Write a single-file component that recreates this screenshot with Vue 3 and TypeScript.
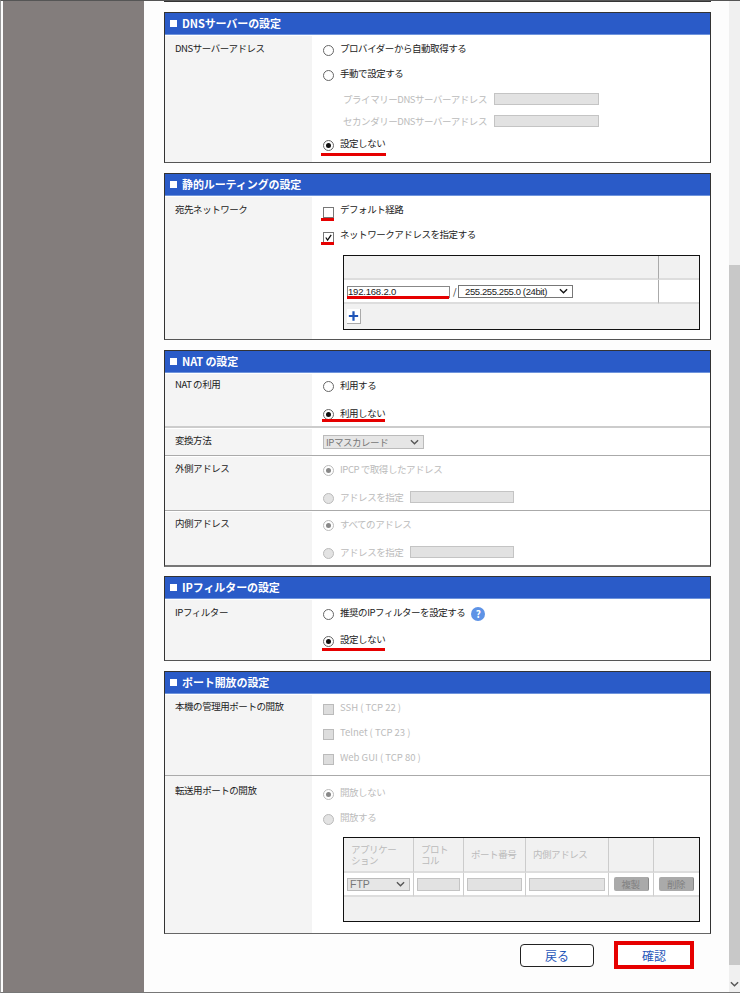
<script setup lang="ts">
const ports = ['SSH ( TCP 22 )', 'Telnet ( TCP 23 )', 'Web GUI ( TCP 80 )']
</script>

<template>
  <div class="window">
    <aside class="sidebar"></aside>
    <main class="content">
      <div class="cut"></div>

      <section class="panel p1">
        <h2><i></i>DNSサーバーの設定</h2>
        <div class="row">
          <div class="label">DNSサーバーアドレス</div>
          <div class="value">
            <div class="opt"><span class="radio"></span><span>プロバイダーから自動取得する</span></div>
            <div class="opt"><span class="radio"></span><span>手動で設定する</span></div>
            <div class="opt sub off"><span class="sublabel">プライマリーDNSサーバーアドレス</span><span class="field f-dns"></span></div>
            <div class="opt sub off short"><span class="sublabel">セカンダリーDNSサーバーアドレス</span><span class="field f-dns"></span></div>
            <div class="opt"><span class="radio on"></span><span>設定しない</span><b class="mark m-radio"></b></div>
          </div>
        </div>
      </section>

      <section class="panel p2">
        <h2><i></i>静的ルーティングの設定</h2>
        <div class="row">
          <div class="label">宛先ネットワーク</div>
          <div class="value">
            <div class="opt"><span class="check"></span><span>デフォルト経路</span><b class="mark m-check"></b></div>
            <div class="opt">
              <span class="check">
                <svg viewBox="0 0 10 10"><path d="M2 5l2 3 4-6" fill="none" stroke="#111" stroke-width="1.4" /></svg>
              </span>
              <span>ネットワークアドレスを指定する</span><b class="mark m-check m-check2"></b>
            </div>
            <div class="route">
              <div class="r-head"></div><div class="r-head r-side"></div>
              <div class="r-cell">
                <span class="ip">192.168.2.0<b class="mark m-ip"></b></span>
                <span class="slash">/</span>
                <span class="select s-mask">255.255.255.0 (24bit)<svg viewBox="0 0 10 6"><path d="M1 1l4 4 4-4" fill="none" stroke="#111" stroke-width="1.5" /></svg></span>
              </div>
              <div class="r-cell r-side"></div>
              <div class="r-foot">
                <span class="plus"><svg viewBox="0 0 14 14"><path d="M7 2v10M2 7h10" stroke="#1f55b8" stroke-width="2.4" /></svg></span>
              </div>
            </div>
          </div>
        </div>
      </section>

      <section class="panel p3">
        <h2><i></i>NAT の設定</h2>
        <div class="row h53">
          <div class="label l-tight">NAT の利用</div>
          <div class="value">
            <div class="opt o24"><span class="radio"></span><span>利用する</span></div>
            <div class="opt o24"><span class="radio on"></span><span>利用しない</span><b class="mark m-nat"></b></div>
          </div>
        </div>
        <div class="row sep2 h27">
          <div class="label l-mid">変換方法</div>
          <div class="value off centered">
            <span class="select s-nat">IPマスカレード<svg viewBox="0 0 10 6"><path d="M1 1l4 4 4-4" fill="none" stroke="#555" stroke-width="1.5" /></svg></span>
          </div>
        </div>
        <div class="row sep1 h54">
          <div class="label l-mid">外側アドレス</div>
          <div class="value off v2">
            <div class="opt o24"><span class="radio on"></span><span>IPCP で取得したアドレス</span></div>
            <div class="opt o24"><span class="radio"></span><span>アドレスを指定</span><span class="field f-nat"></span></div>
          </div>
        </div>
        <div class="row sep1 h54">
          <div class="label l-mid">内側アドレス</div>
          <div class="value off v2">
            <div class="opt o24"><span class="radio on"></span><span>すべてのアドレス</span></div>
            <div class="opt o24"><span class="radio"></span><span>アドレスを指定</span><span class="field f-nat"></span></div>
          </div>
        </div>
      </section>

      <section class="panel p4">
        <h2><i></i>IPフィルターの設定</h2>
        <div class="row">
          <div class="label">IPフィルター</div>
          <div class="value">
            <div class="opt o26"><span class="radio"></span><span>推奨のIPフィルターを設定する</span><span class="help">?</span></div>
            <div class="opt o28"><span class="radio on"></span><span>設定しない</span><b class="mark m-filter"></b></div>
          </div>
        </div>
      </section>

      <section class="panel p5">
        <h2><i></i>ポート開放の設定</h2>
        <div class="row h81">
          <div class="label l-mid">本機の管理用ポートの開放</div>
          <div class="value off">
            <div v-for="p in ports" :key="p" class="opt"><span class="check"></span><span class="latin">{{ p }}</span></div>
          </div>
        </div>
        <div class="row sep1 grow">
          <div class="label l-low">転送用ポートの開放</div>
          <div class="value off v4">
            <div class="opt"><span class="radio on"></span><span>開放しない</span></div>
            <div class="opt"><span class="radio"></span><span>開放する</span></div>
            <div class="forward">
              <div class="th">アプリケー<br />ション</div>
              <div class="th">プロト<br />コル</div>
              <div class="th">ポート番号</div>
              <div class="th">内側アドレス</div>
              <div class="th"></div>
              <div class="th last"></div>
              <div class="td"><span class="select s-ftp">FTP<svg viewBox="0 0 10 6"><path d="M1 1l4 4 4-4" fill="none" stroke="#555" stroke-width="1.5" /></svg></span></div>
              <div class="td"><span class="field fill"></span></div>
              <div class="td"><span class="field fill"></span></div>
              <div class="td"><span class="field fill"></span></div>
              <div class="td"><span class="mini">複製</span></div>
              <div class="td last"><span class="mini">削除</span></div>
              <div class="tf"></div>
            </div>
          </div>
        </div>
      </section>

      <div class="actions">
        <button type="button" class="btn">戻る</button>
        <button type="button" class="btn primary">確認</button>
      </div>
    </main>
    <div class="scrollbar">
      <div class="thumb"></div>
      <svg class="arrow" viewBox="0 0 10 6"><path d="M1 1l4 4 4-4" fill="none" stroke="#555" stroke-width="1.6" /></svg>
    </div>
  </div>
</template>

<style>
html, body { margin: 0; background: #fff; }
</style>

<style scoped>
.window {
  width: 740px;
  height: 993px;
  box-sizing: border-box;
  display: flex;
  overflow: hidden;
  border-top: 1px solid #555;
  border-bottom: 1px solid #777;
  border-left: 1px solid #999;
  background: #fdfdfd;
  font-family: "Noto Sans CJK JP", "Liberation Sans", sans-serif;
  font-size: 9.5px;
  letter-spacing: -0.45px;
  color: #222;
}
.sidebar { width: 141px; margin-left: 2px; background: #837d7c; flex: none; }
.content { width: 585px; padding: 0 18px 0 20px; box-sizing: border-box; flex: none; }
.cut { height: 0; border-bottom: 1px solid #333; margin-bottom: 10px; }

.panel {
  border: 1px solid #333;
  border-bottom-color: #555;
  background: #fff;
  margin-bottom: 10px;
  display: flex;
  flex-direction: column;
  box-sizing: border-box;
}
.p1 { height: 151px; }
.p2 { height: 167px; }
.p3 { height: 217px; margin-bottom: 9px; border-bottom: 2px solid #777; }
.p4 { height: 85px; }
.p5 { height: 263px; margin-bottom: 7px; border-bottom-color: #666; }

h2 {
  margin: 0;
  height: 19px;
  box-sizing: content-box;
  flex: none;
  display: flex;
  align-items: center;
  background: #2a5bc8;
  border-bottom: 1px solid #6f94dc;
  color: #fff;
  font-size: 11px;
  letter-spacing: -0.1px;
  font-weight: 700;
  padding: 0 0 2px 5px;
  line-height: 18px;
}
h2 i { width: 7px; height: 7px; background: #fff; margin-right: 5px; margin-top: 1px; }

.row { display: flex; flex: 1; min-height: 0; }
.h53 { flex: none; height: 53px; }
.h54 { flex: none; height: 54px; }
.h27 { flex: none; height: 27px; }
.h81 { flex: none; height: 81px; }
.grow { flex: 1; }
.sep1 { border-top: 1px solid #aaa; }
.sep2 { border-top: 2px solid #ccc; }
.label {
  width: 147px;
  flex: none;
  background: #f4f4f4;
  box-sizing: border-box;
  padding: 5px 0 0 10px;
  line-height: 14px;
  margin-top: 1px;
}
.label.l-tight { padding-top: 3px; }
.label.l-mid { padding-top: 4px; }
.label.l-low { padding-top: 7px; margin-top: 0; }
.value { flex: 1; padding-left: 11px; padding-top: 1px; }
.value.v2 { padding-top: 2px; }
.value.v4 { padding-top: 4px; }
.value.centered { display: flex; align-items: center; padding-top: 0; }
.off { color: #bbb; }

.opt {
  height: 25px;
  box-sizing: border-box;
  padding-bottom: 2px;
  display: flex;
  align-items: center;
  gap: 5px;
  position: relative;
  white-space: nowrap;
}
.opt.o24 { height: 24px; margin-bottom: 4px; }
.opt.o26 { height: 26px; }
.opt.o28 { height: 28px; }
.opt.short { height: 20px; }
.opt.sub { padding-left: 20px; padding-bottom: 0; gap: 7px; }
.opt.sub .sublabel { width: 144px; white-space: nowrap; }
.latin { letter-spacing: 0; }

.radio {
  width: 9px;
  height: 9px;
  border: 1px solid #666;
  border-radius: 50%;
  background: #fff;
  flex: none;
  position: relative;
  margin-top: 5px;
  margin-right: 1px;
}
.o24 .radio { margin-top: 2px; }
.radio.on::after {
  content: "";
  position: absolute;
  inset: 2px;
  border-radius: 50%;
  background: #111;
}
.off .radio { border-color: #bbb; background: #e3e3e3; }
.off .radio.on { background: #fff; }
.off .radio.on::after { background: #888; }

.check {
  width: 9px;
  height: 9px;
  border: 1px solid #777;
  background: #fff;
  flex: none;
  margin-top: 7px;
  margin-right: 1px;
  display: block;
}
.off .check { margin-top: 5px; background: #ddd; border-color: #bbb; }
.check svg { display: block; width: 9px; height: 9px; }

.mark { position: absolute; height: 3px; background: #e60000; }
.m-radio { left: -2px; width: 65px; bottom: 0; }
.m-check { left: -2px; width: 13px; bottom: 1px; }
.m-check2 { bottom: 2px; }
.m-nat { left: -1px; width: 63px; bottom: 4px; }
.m-filter { left: -1px; width: 63px; bottom: 3px; }
.m-ip { left: -1px; right: 0; bottom: -2px; }

.field {
  display: block;
  height: 10px;
  background: #e2e2e2;
  border: 1px solid #c4c4c4;
  flex: none;
}
.f-dns { width: 103px; }
.f-nat { width: 102px; margin-left: 2px; }
.fill { width: 100%; box-sizing: border-box; height: 13px; }

.route {
  margin: 8px 0 0 20px;
  width: 357px;
  height: 75px;
  box-sizing: border-box;
  border: 1px solid #111;
  display: grid;
  grid-template-columns: 1fr 41px;
  grid-template-rows: 24px 24px 1fr;
  background: #fff;
}
.r-head { background: #f1f1f1; border-bottom: 2px solid #ddd; }
.r-side { border-left: 1px solid #aaa; }
.r-cell { display: flex; align-items: center; padding-left: 3px; border-bottom: 2px solid #ddd; gap: 3px; color: #222; }
.r-foot { grid-column: 1 / 3; background: #f1f1f1; padding: 5px 0 0 3px; }
.ip {
  position: relative;
  width: 103px;
  height: 12px;
  margin-top: 1px;
  box-sizing: border-box;
  border: 1px solid #888;
  line-height: 9px;
  padding-left: 0;
  font-family: "Liberation Sans", sans-serif;
  font-size: 9.5px;
  letter-spacing: -0.2px;
}
.slash { font-size: 9px; }
.select {
  display: flex;
  align-items: center;
  justify-content: space-between;
  box-sizing: border-box;
  border: 1px solid #777;
  height: 13px;
  padding: 0 4px 0 2px;
  background: #fff;
  white-space: nowrap;
}
.select svg { width: 9px; height: 6px; flex: none; }
.s-mask { width: 115px; margin-left: -1px; padding-left: 6px; font-family: "Liberation Sans", sans-serif; letter-spacing: -0.4px; }
.s-nat { width: 101px; background: #e6e6e6; border-color: #bbb; color: #777; height: 14px; }
.s-ftp { width: 64px; background: #e6e6e6; border-color: #bbb; color: #777; font-family: "Liberation Sans", sans-serif; font-size: 10.5px; letter-spacing: 0; }
.plus {
  display: block;
  width: 13px;
  height: 14px;
  border-right: 1px solid #aaa;
  border-bottom: 1px solid #aaa;
  background: #fff;
}
.plus svg { display: block; width: 13px; height: 14px; }

.help {
  width: 14px;
  height: 14px;
  border-radius: 50%;
  background: #5e93e6;
  color: #fff;
  font-weight: 700;
  font-size: 10px;
  letter-spacing: 0;
  line-height: 14px;
  text-align: center;
  margin-left: 1px;
  margin-top: 4px;
}

.forward {
  margin: 7px 0 0 20px;
  width: 357px;
  height: 85px;
  box-sizing: border-box;
  border: 1px solid #111;
  display: grid;
  grid-template-columns: 70px 50px 62px 83px 45px 1fr;
  grid-template-rows: 35px 24px 1fr;
}
.th, .td { border-right: 1px solid #ccc; border-bottom: 2px solid #ddd; box-sizing: border-box; }
.last { border-right: 0; }
.th { background: #f1f1f1; display: flex; align-items: center; padding: 0 0 0 7px; line-height: 11px; color: #bbb; white-space: nowrap; }
.td { display: flex; align-items: center; justify-content: center; padding: 0 3px; }
.tf { grid-column: 1 / 7; background: #f1f1f1; }
.mini {
  width: 34px;
  height: 14px;
  background: #aaa;
  color: #808080;
  border-radius: 2px;
  line-height: 14px;
  text-align: center;
  border-right: 1px solid #888;
}

.actions { display: flex; justify-content: flex-end; align-items: center; gap: 20px; padding-right: 17px; }
.btn {
  width: 74px;
  height: 23px;
  padding: 0;
  background: #fff;
  border: 1px solid #222;
  border-radius: 4px;
  color: #1f55b8;
  font: 12px "Noto Sans CJK JP", sans-serif;
}
.primary { width: 80px; height: 28px; border: 4px solid #e60000; border-radius: 0; }

.scrollbar { width: 11px; flex: none; background: #f0f0f0; position: relative; }
.thumb { position: absolute; top: 264px; bottom: 27px; left: 0; right: 0; background: #c8c8c8; }
.arrow { position: absolute; left: 1px; bottom: 5px; width: 9px; height: 6px; }
</style>
